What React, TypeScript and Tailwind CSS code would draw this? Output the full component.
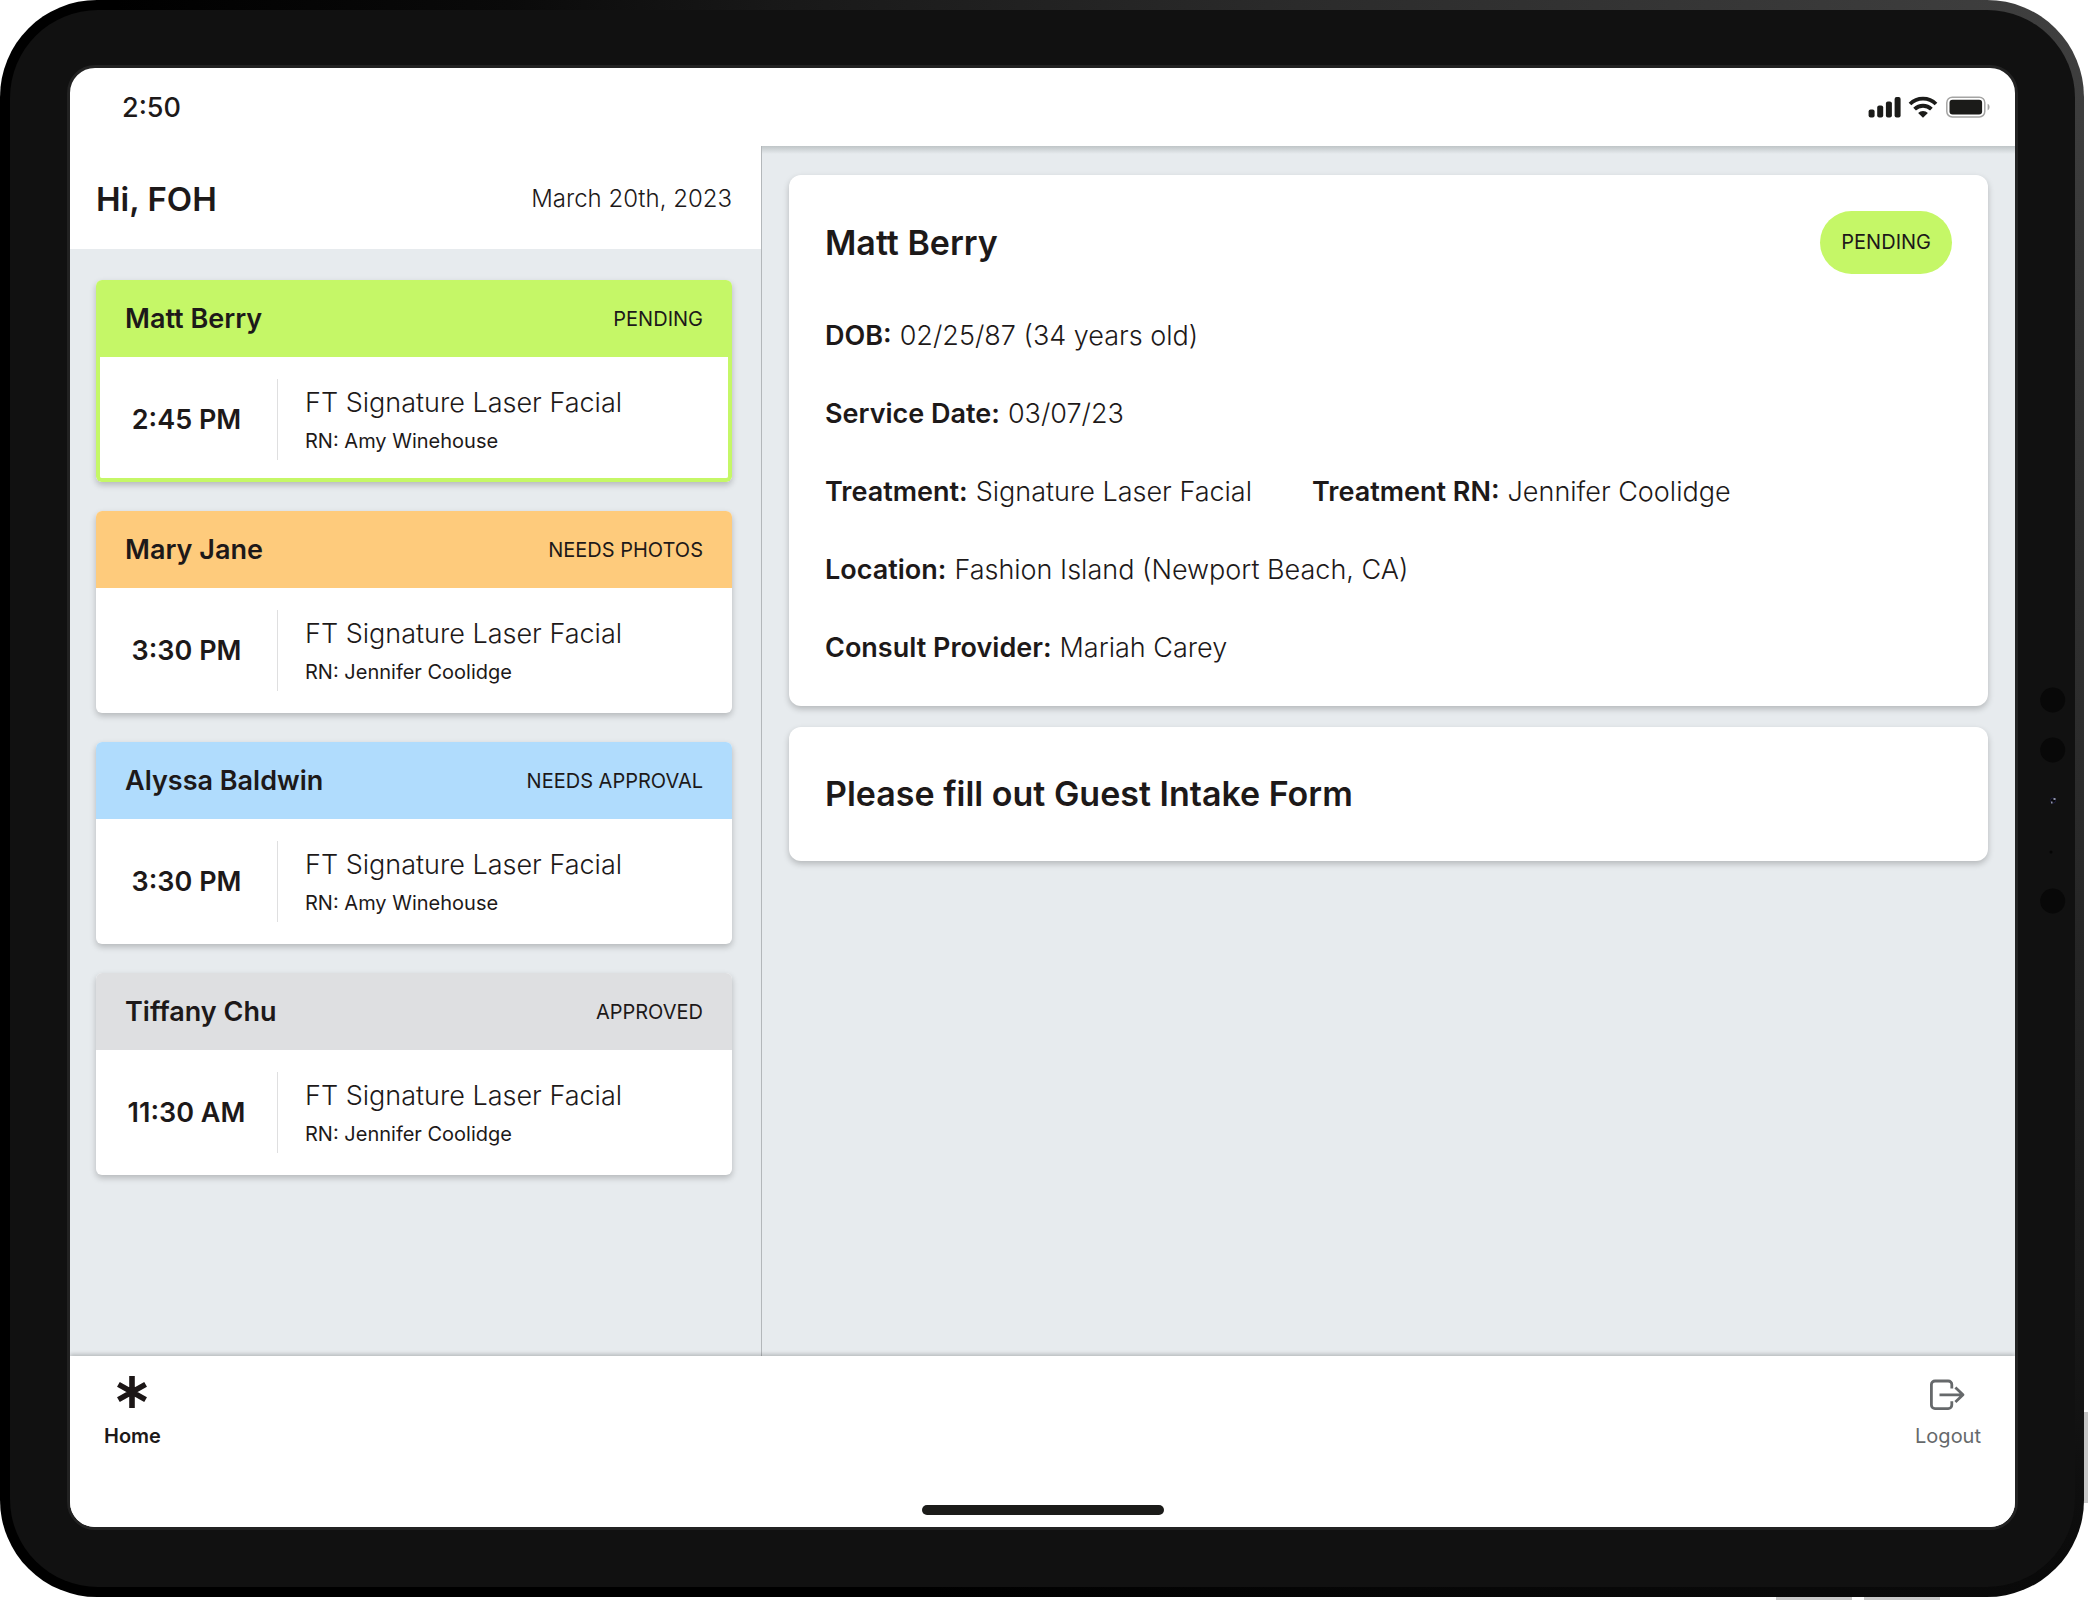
import clsx from "clsx";

type Appointment = {
  name: string;
  status: string;
  time: string;
  service: string;
  nurse: string;
  headerClass: string;
  selected?: boolean;
};

const appointments: Appointment[] = [
  {
    name: "Matt Berry",
    status: "PENDING",
    time: "2:45 PM",
    service: "FT Signature Laser Facial",
    nurse: "Amy Winehouse",
    headerClass: "bg-[#c5f767]",
    selected: true,
  },
  {
    name: "Mary Jane",
    status: "NEEDS PHOTOS",
    time: "3:30 PM",
    service: "FT Signature Laser Facial",
    nurse: "Jennifer Coolidge",
    headerClass: "bg-[#fecb7c]",
  },
  {
    name: "Alyssa Baldwin",
    status: "NEEDS APPROVAL",
    time: "3:30 PM",
    service: "FT Signature Laser Facial",
    nurse: "Amy Winehouse",
    headerClass: "bg-[#b0dcfd]",
  },
  {
    name: "Tiffany Chu",
    status: "APPROVED",
    time: "11:30 AM",
    service: "FT Signature Laser Facial",
    nurse: "Jennifer Coolidge",
    headerClass: "bg-[#dedfe1]",
  },
];

function StatusIcons() {
  return (
    <svg width="123" height="24" viewBox="0 0 123 24" fill="#1b1b19" aria-hidden="true">
      <rect x="0.6" y="13.6" width="6" height="8" rx="2" />
      <rect x="9.2" y="9.6" width="6" height="12" rx="2" />
      <rect x="17.9" y="5.4" width="6" height="16.2" rx="2" />
      <rect x="26.6" y="1" width="6" height="20.6" rx="2" />
      <g fill="none" stroke="#1b1b19" strokeWidth="3.8">
        <path d="M42 8a18.5 18.5 0 0 1 26 0" />
        <path d="M46.6 13.2a12 12 0 0 1 16.8 0" />
      </g>
      <path d="M55 21.8l-4.9-4.9a7 7 0 0 1 9.8 0z" />
      <rect x="78.8" y="1.2" width="38" height="19.8" rx="5.5" fill="none" stroke="#a4a4a3" strokeWidth="1.5" />
      <rect x="81.5" y="3.8" width="32.6" height="14.6" rx="3" />
      <path d="M119.6 7.8c2.6 1 2.6 5.6 0 6.6z" fill="#a4a4a3" />
    </svg>
  );
}

function HomeIcon() {
  return (
    <svg width="32" height="36" viewBox="0 0 32 36" fill="none" stroke="#1c1616" strokeWidth="5.6" aria-hidden="true">
      <path d="M16 2v32M2.4 10.4l27.2 15.2M29.6 10.4L2.4 25.6" />
    </svg>
  );
}

function LogoutIcon() {
  return (
    <svg
      width="38"
      height="36"
      viewBox="0 0 38 36"
      fill="none"
      stroke="#66696b"
      strokeWidth="2.8"
      strokeLinejoin="round"
      aria-hidden="true"
    >
      <path d="M22.8 14.4v-3.8A3.6 3.6 0 0 0 19.2 7H6a3.6 3.6 0 0 0-3.6 3.6v20.4A3.6 3.6 0 0 0 6 34.6h13.2a3.6 3.6 0 0 0 3.6-3.6v-3.8" />
      <path d="M10.5 20.8h23.5M26.4 13.6l7.6 7.2-7.6 7.2" />
    </svg>
  );
}

function Sensors() {
  return (
    <svg width="57" height="240" viewBox="0 0 57 240" className="shrink-0 self-center" aria-hidden="true">
      <circle cx="34.7" cy="22" r="12.5" fill="#080808" />
      <circle cx="34.7" cy="72" r="12.5" fill="#080808" />
      <circle cx="35" cy="122.5" r="2.6" fill="#080808" stroke="#1c1c3c" />
      <path d="M35.5 120h2v2h-2zM33 123.5h1.5v2H33z" fill="#8f93a8" />
      <circle cx="33" cy="174" r="1.5" fill="#050505" />
      <circle cx="34.7" cy="223" r="12.5" fill="#080808" />
    </svg>
  );
}

function AppointmentCard({ item }: { item: Appointment }) {
  return (
    <button
      type="button"
      className="block w-full overflow-hidden rounded-md bg-white text-left shadow-[0_3px_6px_rgba(0,0,0,0.22)]"
    >
      <span className={clsx("flex items-center justify-between px-[29px] py-5", item.headerClass)}>
        <span className="text-[27px] leading-[37px] font-semibold">{item.name}</span>
        <span className="text-[20px] leading-7 font-normal">{item.status}</span>
      </span>
      <span
        className={clsx(
          "flex items-center py-[22px]",
          item.selected &&
            "rounded-b-md shadow-[inset_4px_0_0_#c5f767,inset_-4px_0_0_#c5f767,inset_0_-4px_0_#c5f767]"
        )}
      >
        <span className="w-[181px] shrink-0 text-center text-[27px] leading-9 font-semibold">{item.time}</span>
        <span className="flex flex-col justify-center gap-1.5 self-stretch border-l border-[#dfdfe0] py-[5px] pl-[27px]">
          <span className="text-[27px] leading-[37px] font-light">{item.service}</span>
          <span className="text-[20px] leading-7 font-normal">RN: {item.nurse}</span>
        </span>
      </span>
    </button>
  );
}

function Field({ label, value }: { label: string; value: string }) {
  return (
    <div className="flex gap-2 text-[27px] leading-9">
      <dt className="font-semibold">{label}</dt>
      <dd className="font-light">{value}</dd>
    </div>
  );
}

export default function App() {
  return (
    <div className="relative flex min-h-screen bg-white pr-1 pb-[3px] font-['Inter',sans-serif] text-[#1d1919]">
      {/* Hardware buttons */}
      <div className="absolute right-0 bottom-[97px] h-[91px] w-2 bg-[#c8c8c8]" />
      <div className="absolute right-[148px] bottom-0 h-2 w-[76px] bg-[#c8c8c8]" />
      <div className="absolute right-[236px] bottom-0 h-2 w-[76px] bg-[#c8c8c8]" />

      {/* Tablet frame */}
      <div className="relative flex flex-1 rounded-[97px] bg-[radial-gradient(circle_at_top_right,#404040_0%,#2b2b2b_30%,#181818_50%,#0a0a0a_60%,#000_75%)] py-2.5 pr-[9px] pl-2.5">
        <div className="flex flex-1 rounded-[88px] bg-[#111] pt-[55px] pb-[57px] pl-[57px]">
          <div className="flex flex-1 flex-col overflow-hidden rounded-[28px] border-3 border-[#222] bg-white">
            <div className="flex shrink-0 items-center justify-between pt-[22px] pr-6 pb-5 pl-[52px]">
              <span className="text-[27px] leading-9 font-medium">2:50</span>
              <StatusIcons />
            </div>

            <main className="flex flex-1 bg-[#e7ebee]">
              <aside className="w-[692px] shrink-0 border-r border-[#b3b7ba]">
                <header className="flex items-center justify-between bg-white pt-[33px] pr-[29px] pb-[30px] pl-[26px]">
                  <h1 className="text-[33px] leading-10 font-semibold">Hi, FOH</h1>
                  <p className="text-[24px] leading-10 font-light">March 20th, 2023</p>
                </header>
                <div className="flex flex-col gap-[29px] py-[31px] pr-[29px] pl-[26px]">
                  {appointments.map((item) => (
                    <AppointmentCard key={item.name} item={item} />
                  ))}
                </div>
              </aside>

              <section className="flex flex-1 flex-col gap-[21px] bg-[linear-gradient(to_bottom,#bfc5c7,#e7ebee_8px)] px-[27px] py-[29px]">
                <div className="rounded-xl bg-white px-9 pt-9 pb-10 shadow-[0_3px_6px_rgba(0,0,0,0.22)]">
                  <div className="flex items-center justify-between">
                    <h2 className="text-[34px] leading-10 font-semibold">Matt Berry</h2>
                    <span className="rounded-full bg-[#c5f767] px-[21px] py-[17px] text-[20px] leading-[29px] font-normal">
                      PENDING
                    </span>
                  </div>
                  <dl className="mt-11 flex flex-col gap-[42px]">
                    <Field label="DOB:" value="02/25/87 (34 years old)" />
                    <Field label="Service Date:" value="03/07/23" />
                    <div className="flex gap-[60px]">
                      <Field label="Treatment:" value="Signature Laser Facial" />
                      <Field label="Treatment RN:" value="Jennifer Coolidge" />
                    </div>
                    <Field label="Location:" value="Fashion Island (Newport Beach, CA)" />
                    <Field label="Consult Provider:" value="Mariah Carey" />
                  </dl>
                </div>

                <div className="rounded-xl bg-white px-9 py-[47px] shadow-[0_3px_6px_rgba(0,0,0,0.22)]">
                  <h2 className="text-[34px] leading-10 font-semibold">Please fill out Guest Intake Form</h2>
                </div>
              </section>
            </main>

            <nav className="relative flex flex-col gap-[57px] bg-white pt-[18px] pb-3 shadow-[0_-2px_4px_rgba(0,0,0,0.2)]">
              <div className="flex justify-between px-[34px]">
                <a href="#home" className="flex flex-col items-center gap-3.5">
                  <HomeIcon />
                  <span className="text-[20px] leading-6 font-semibold">Home</span>
                </a>
                <a href="#logout" className="flex flex-col items-center gap-3.5 text-[#66696b]">
                  <LogoutIcon />
                  <span className="text-[20px] leading-6 font-normal">Logout</span>
                </a>
              </div>
              <div className="h-2.5 w-[242px] self-center rounded-full bg-[#1b1b19]" />
            </nav>
          </div>
          <Sensors />
        </div>
      </div>
    </div>
  );
}
